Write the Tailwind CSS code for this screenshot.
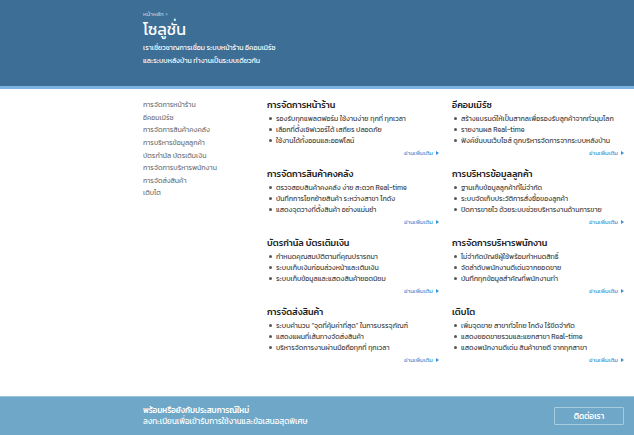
<!DOCTYPE html>
<html lang="th">
<head>
<meta charset="utf-8">
<meta name="viewport" content="width=device-width, initial-scale=1">
<title>โซลูชั่น</title>
<script src="https://cdn.jsdelivr.net/npm/@tailwindcss/browser@4"></script>
</head>
<body class="flex min-h-screen flex-col bg-white font-['Kanit','Prompt','Noto_Sans_Thai','Noto_Sans',sans-serif] text-[7px] text-[#444]">
<header class="border-b-3 border-[#7db3e0] bg-[#3d6e96] pt-[10px] pr-[10px] pb-[19px] pl-[143px] text-white">
  <nav class="text-[6px] leading-[8px] text-[#b9cddd]"><a href="#">หน้าหลัก</a> ›</nav>
  <h1 class="mb-px text-[16px] leading-[22px]">โซลูชั่น</h1>
  <p class="text-[7px] leading-[13px]">เราเชี่ยวชาญการเชื่อม ระบบหน้าร้าน อีคอมเมิร์ซ<br>และระบบหลังบ้าน ทำงานเป็นระบบเดียวกัน</p>
</header>
<main class="flex grow pt-[9px] pr-[10px] pb-[30px] pl-[143px]">
  <nav class="w-[124px] shrink-0 text-[#73777c]">
    <ul class="grid h-[101px] grid-rows-8 leading-[13px]">
      <li><a href="#s1">การจัดการหน้าร้าน</a></li>
      <li><a href="#s2">อีคอมเมิร์ซ</a></li>
      <li><a href="#s3">การจัดการสินค้าคงคลัง</a></li>
      <li><a href="#s4">การบริหารข้อมูลลูกค้า</a></li>
      <li><a href="#s5">บัตรกำนัล บัตรเติมเงิน</a></li>
      <li><a href="#s6">การจัดการบริหารพนักงาน</a></li>
      <li><a href="#s7">การจัดส่งสินค้า</a></li>
      <li><a href="#s8">เติบโต</a></li>
    </ul>
  </nav>
  <div id="cards" class="grid grow grid-cols-2 content-start gap-x-[13px] gap-y-[9px] whitespace-nowrap"></div>
</main>
<footer class="flex items-center justify-between border-t border-[#9cc6dd] bg-[#6ea7c7] py-[8px] pr-[10px] pl-[143px] text-[8px] text-white">
  <p class="leading-[11px]"><strong class="font-medium">พร้อมหรือยังกับประสบการณ์ใหม่</strong><br>ลงทะเบียนเพื่อเข้ารับการใช้งานและข้อเสนอสุดพิเศษ</p>
  <button type="button" class="h-[18px] w-[70px] rounded-[1px] border border-[#a5cde2] font-medium leading-[14px]">ติดต่อเรา</button>
</footer>
<script>
const sections = [
  ['การจัดการหน้าร้าน', 'รองรับทุกแพลตฟอร์ม ใช้งานง่าย ทุกที่ ทุกเวลา', 'เลือกที่ตั้งเซิฟเวอร์ได้ เสถียร ปลอดภัย', 'ใช้งานได้ทั้งออนและออฟไลน์'],
  ['อีคอมเมิร์ซ', 'สร้างแบรนด์ให้เป็นสากลเพื่อรองรับลูกค้าจากทั่วมุมโลก', 'รายงานผล Real-time', 'ฟังค์ชั่นบนเว็บไซส์ ดูกบริหารจัดการจากระบบหลังบ้าน'],
  ['การจัดการสินค้าคงคลัง', 'ตรวจสอบสินค้าคงคลัง ง่าย สะดวก Real-time', 'บันทึกการโยกย้ายสินค้า ระหว่างสาขา โกดัง', 'แสดงจุดวางที่ตั้งสินค้า อย่างแม่นยำ'],
  ['การบริหารข้อมูลลูกค้า', 'ฐานเก็บข้อมูลลูกค้าที่ไม่จำกัด', 'ระบบจัดเก็บประวัติการสั่งซื้อของลูกค้า', 'ปิดการขายไว ด้วยระบบช่วยบริหารงานด้านการขาย'],
  ['บัตรกำนัล บัตรเติมเงิน', 'กำหนดคุณสมบัติตามที่คุณปรารถนา', 'ระบบเก็บเงินก่อนล่วงหน้าและเติมเงิน', 'ระบบเก็บข้อมูลและแสดงสินค้ายอดนิยม'],
  ['การจัดการบริหารพนักงาน', 'ไม่จำกัดบัญชีผู้ใช้พร้อมกำหนดสิทธิ์', 'จัดลำดับพนักงานดีเด่นจากยอดขาย', 'บันทึกทุกข้อมูลสำคัญที่พนักงานทำ'],
  ['การจัดส่งสินค้า', 'ระบบคำนวน “จุดที่คุ้มค่าที่สุด” ในการบรรจุภัณฑ์', 'แสดงแผนที่เส้นทางจัดส่งสินค้า', 'บริหารจัดการงานผ่านมือถือทุกที่ ทุกเวลา'],
  ['เติบโต', 'เพิ่มจุดขาย สาขาทั่วไทย โกดัง ไร้ขีดจำกัด', 'แสดงยอดขายรวมและแยกสาขา Real-time', 'แสดงพนักงานดีเด่น สินค้าขายดี จากทุกสาขา']
];
document.getElementById('cards').innerHTML = sections.map(([title, ...items], i) => `
  <section id="s${i + 1}" class="min-w-0">
    <h2 class="mb-px text-[9px] leading-[14px] font-medium text-[#222]">${title}</h2>
    <ul class="leading-[11px]">${items.map(t => `
      <li class="flex items-center gap-[4px] pl-[2px]"><span class="size-[3px] shrink-0 rounded-full bg-[#555]"></span>${t}</li>`).join('')}
    </ul>
    <a href="#s${i + 1}" class="mt-[2px] flex items-center justify-end gap-[3px] text-[6px] leading-[10px] text-[#3a8fd4]">อ่านเพิ่มเติม
      <svg class="h-[4px] w-[3px]" viewBox="0 0 3 4" fill="currentColor" aria-hidden="true"><path d="M0 0L3 2L0 4Z"/></svg></a>
  </section>`).join('');
</script>
</body>
</html>
